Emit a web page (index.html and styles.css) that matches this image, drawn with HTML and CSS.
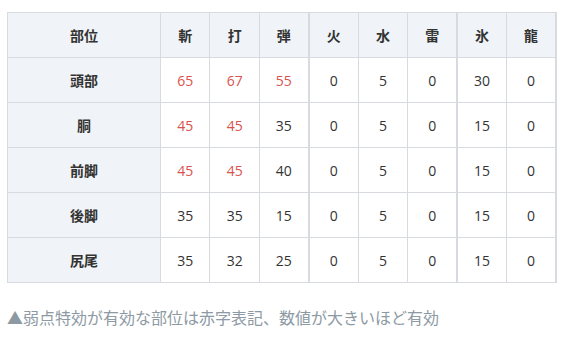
FILE: index.html
```html
<!DOCTYPE html>
<html lang="ja">
<head>
<meta charset="utf-8">
<link rel="stylesheet" href="styles.css">
</head>
<body>
<div class="wrap">
<table class="hz">
<thead>
<tr><th class="part">部位</th><th>斬</th><th>打</th><th class="sep">弾</th><th>火</th><th>水</th><th class="sep">雷</th><th>氷</th><th class="last">龍</th></tr>
</thead>
<tbody>
<tr><th class="part">頭部</th><td class="red">65</td><td class="red">67</td><td class="red sep">55</td><td>0</td><td>5</td><td class="sep">0</td><td>30</td><td class="last">0</td></tr>
<tr><th class="part">胴</th><td class="red">45</td><td class="red">45</td><td class="sep">35</td><td>0</td><td>5</td><td class="sep">0</td><td>15</td><td class="last">0</td></tr>
<tr><th class="part">前脚</th><td class="red">45</td><td class="red">45</td><td class="sep">40</td><td>0</td><td>5</td><td class="sep">0</td><td>15</td><td class="last">0</td></tr>
<tr><th class="part">後脚</th><td>35</td><td>35</td><td class="sep">15</td><td>0</td><td>5</td><td class="sep">0</td><td>15</td><td class="last">0</td></tr>
<tr><th class="part">尻尾</th><td>35</td><td>32</td><td class="sep">25</td><td>0</td><td>5</td><td class="sep">0</td><td>15</td><td class="last">0</td></tr>
</tbody>
</table>
<p class="note">▲弱点特効が有効な部位は赤字表記、数値が大きいほど有効</p>
</div>
</body>
</html>
```
FILE: styles.css
```css
html, body {
  margin: 0;
  padding: 0;
  background: #ffffff;
}
body {
  font-family: "Open Sans", "Noto Sans CJK JP", sans-serif;
  color: #333333;
}
.wrap {
  padding: 12px 5px 0 7px;
}
.hz {
  width: 550px;
  border-collapse: collapse;
  table-layout: fixed;
  font-size: 14px;
}
.hz th, .hz td {
  border: 1px solid #d7dbe0;
  height: 44px;
  padding: 0;
  text-align: center;
  vertical-align: middle;
}
.hz th {
  background: #f0f3f7;
  font-weight: bold;
  font-family: "Noto Sans CJK JP", sans-serif;
  color: #333333;
}
.hz .part {
  width: 152px;
}
.hz td {
  background: #ffffff;
}
.hz .sep {
  border-right: 2px solid #d7dbe0;
}
.hz .last {
  border-right: 2px solid #d7dbe0;
}
.hz .red {
  color: #d9534f;
}
.note {
  margin: 22px 0 0 0;
  font-family: "Noto Sans CJK JP", sans-serif;
  font-size: 16px;
  color: #8d9aa4;
  line-height: 24px;
}
```
